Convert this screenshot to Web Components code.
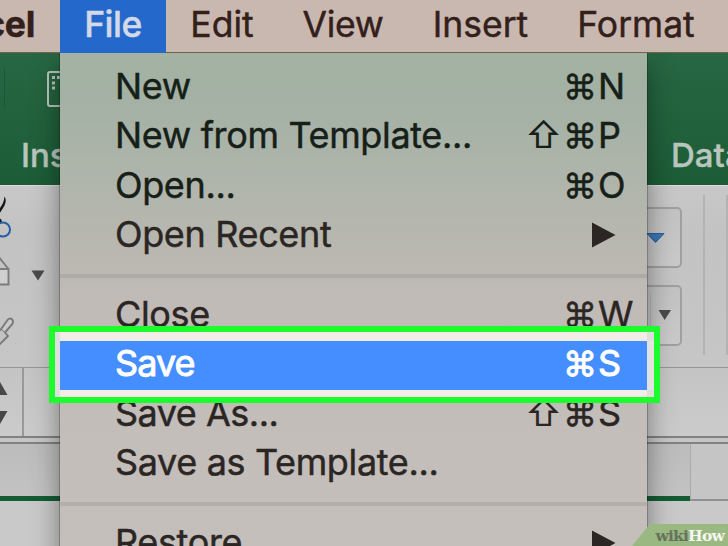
<!DOCTYPE html>
<html lang="en">
<head>
<meta charset="utf-8">
<title>File menu</title>
<style>
    html, body {
        margin: 0;
        width: 728px;
        height: 546px;
        overflow: hidden;
        font-family: Inter, "Liberation Sans", sans-serif;
    }
</style>
</head>
<body>
<app-screen>
    <menu-bar slot="bar">
        <bar-item app style="width: 60px">Excel</bar-item>
        <bar-item active style="width: 106px; --track: -0.5px">File</bar-item>
        <bar-item style="width: 112px; --track: 0">Edit</bar-item>
        <bar-item style="width: 130px">View</bar-item>
        <bar-item style="width: 145px; --track: 0">Insert</bar-item>
        <bar-item style="width: 166px; --track: 0">Format</bar-item>
    </menu-bar>
    <sheet-window slot="window"></sheet-window>
    <drop-menu slot="menu">
        <menu-row cmd="⌘" key="N">New</menu-row>
        <menu-row shift="⇧" cmd="⌘" key="P">New from Template...</menu-row>
        <menu-row cmd="⌘" key="O">Open...</menu-row>
        <menu-row submenu>Open Recent</menu-row>
        <menu-divider></menu-divider>
        <menu-row cmd="⌘" key="W">Close</menu-row>
        <menu-row selected cmd="⌘" key="S" style="--track: -0.9px">Save</menu-row>
        <menu-row shift="⇧" cmd="⌘" key="S" style="--track: -0.5px">Save As...</menu-row>
        <menu-row>Save as Template...</menu-row>
        <menu-divider></menu-divider>
        <menu-row submenu>Restore</menu-row>
    </drop-menu>
    <focus-frame slot="overlay"></focus-frame>
    <wiki-badge slot="overlay"><b>wiki</b><i>How</i></wiki-badge>
</app-screen>

<script>
class AppScreen extends HTMLElement {
    constructor() {
        super();
        const shadow = this.attachShadow({ mode: 'open' });
        shadow.innerHTML = `
        <style>
            :host {
                display: flex;
                flex-direction: column;
                position: relative;
                width: 728px;
                height: 546px;
                overflow: hidden;
                background: #c6c6c6;
            }
        </style>
        <slot name="bar"></slot>
        <slot name="window"></slot>
        <slot name="menu"></slot>
        <slot name="overlay"></slot>
        `;
    }
}

class MenuBar extends HTMLElement {
    constructor() {
        super();
        const shadow = this.attachShadow({ mode: 'open' });
        shadow.innerHTML = `
        <style>
            :host {
                display: flex;
                flex: none;
                height: 53px;
                box-sizing: border-box;
                background: #c9b8b0;
                border-bottom: 1px solid #75604f;
                color: #33201b;
            }
        </style>
        <slot></slot>
        `;
    }
}

class BarItem extends HTMLElement {
    constructor() {
        super();
        const shadow = this.attachShadow({ mode: 'open' });
        shadow.innerHTML = `
        <style>
            :host {
                display: flex;
                flex: none;
                justify-content: center;
                height: 52px;
                box-sizing: border-box;
                font-size: 35.5px;
                line-height: 50px;
                letter-spacing: var(--track, -0.3px);
                white-space: nowrap;
                -webkit-text-stroke: 0.45px currentColor;
            }
            :host([active]) {
                height: 53px;
                background: #2468cb;
                color: #d3d9e6;
                font-weight: 500;
            }
            :host([app]) {
                justify-content: flex-end;
                padding-right: 25px;
                font-weight: 700;
            }
        </style>
        <slot></slot>
        `;
    }
}

// the spreadsheet window that sits behind the open menu
class SheetWindow extends HTMLElement {
    constructor() {
        super();
        const shadow = this.attachShadow({ mode: 'open' });
        shadow.innerHTML = `
        <style>
            :host {
                display: flex;
                flex-direction: column;
                flex: 1;
            }
            .title, .ribbon, .formula, .strip, .cells {
                display: flex;
                justify-content: space-between;
                flex: none;
                box-sizing: border-box;
            }
            .title {
                height: 132px;
                background: linear-gradient(#286743, #1c5c36);
                color: #b9c5bd;
                font-size: 33px;
                font-weight: 500;
                line-height: 40px;
                -webkit-text-stroke: 0.4px currentColor;
            }
            .left, .right {
                display: flex;
                flex-direction: column;
            }
            .title .left { width: 100px; }
            .title .right { width: 57px; padding: 82px 0 0; }
            .title svg { margin: 14px 0 0; flex: none; }
            .tab { margin: 22px 0 0 21px; }
            .ribbon {
                height: 183px;
                border-top: 1px solid #dcdcdc;
                border-bottom: 1px solid #959595;
                background: linear-gradient(#c8c8c8, #c3c3c3 25%, #c6c6c6);
            }
            .ribbon .right {
                flex-direction: row;
                width: 88px;
            }
            .buttons {
                display: flex;
                flex-direction: column;
                gap: 17px;
                width: 48px;
                padding-top: 21px;
            }
            .button {
                display: flex;
                align-items: center;
                justify-content: flex-end;
                height: 61px;
                margin-right: 5px;
                box-sizing: border-box;
                border: 2px solid #a0a0a0;
                border-radius: 5px;
                background: linear-gradient(#c2c2c2, #cacaca);
            }
            .rule {
                flex: none;
                width: 2px;
                height: 160px;
                margin: 9px 0 0 16px;
                background: #b3b3b3;
            }
            .rule:last-child { margin-left: 21px; }
            .formula {
                height: 70px;
                border-bottom: 2px solid #818181;
                background: linear-gradient(#c4c4c4, #cbcbcb);
            }
            .spin {
                width: 24px;
                box-sizing: border-box;
                border-right: 2px solid #999;
            }
            .strip {
                height: 59px;
                margin-top: 4px;
                border-top: 2px solid #818181;
                background: linear-gradient(#bcbcbc, #c3c3c3);
            }
            .sheet {
                flex: 1;
                height: 52px;
                border-bottom: 5px solid #145c34;
            }
            .rest {
                width: 37px;
                height: 55px;
                border-left: 1px solid #aaa;
                border-bottom: 2px solid #919191;
                background: #c5c5c5;
            }
            .cells { flex: 1; background: #c9c9c9; }
        </style>
        <div class="title">
            <div class="left">
                <svg width="100" height="46" viewBox="0 0 100 46">
                    <path d="M4.500 1V41" stroke="#1c5837"/>
                    <rect x="48" y="5" width="30" height="34" rx="2" fill="none" stroke="#b9c5bd" stroke-width="2"/>
                    <g fill="#b9c5bd"><rect x="52" y="9" width="3" height="3"/><rect x="52" y="14.500" width="3" height="3"/><rect x="52" y="19.500" width="3" height="3"/><rect x="57" y="9" width="3" height="3"/></g>
                </svg>
                <span class="tab">Insert</span>
            </div>
            <div class="right"><span style="margin: 0 -40px 0 0">Data</span></div>
        </div>
        <div class="ribbon">
            <svg width="60" height="180" viewBox="0 186 60 180" fill="none">
                <path d="M-1 209C2 206 4 202 4.500 196.500C7.500 201 5 206 -1 214Z" fill="#161616"/>
                <path d="M0 219L1.500 223" stroke="#222" stroke-width="2"/>
                <circle cx="3" cy="229.500" r="7" stroke="#245fa8" stroke-width="2"/>
                <path d="M-12 269H8.500V284.500H-12M-2 256L8.500 269" fill="#cfcfcf" stroke="#7b7b7b" stroke-width="1.900"/>
                <path d="M31.500 270.500H44.500L38 280.500Z" fill="#4a4a4a"/>
                <path d="M-3 328L0 330L1.500 328.500L8 336L-2 346" fill="#c3c3c3" stroke="#797979" stroke-width="1.900" stroke-linejoin="round"/>
                <path d="M1.500 328.500L7.500 320C10 316.500 15 320 12 324.500L5 332.500" fill="#c9c9c9" stroke="#797979" stroke-width="1.900"/>
            </svg>
            <div class="right">
                <div class="buttons">
                    <div class="button">
                        <svg width="34" height="30" viewBox="0 0 34 30"><path d="M1 10.500H18L9.500 19.500Z" fill="#3976b6" stroke="#285e98"/></svg>
                    </div>
                    <div class="button">
                        <svg width="34" height="57" viewBox="0 0 34 57"><path d="M4.500 6V57" stroke="#b6b6b6"/><path d="M12.500 23H25L18.700 33Z" fill="#4b4b4b"/></svg>
                    </div>
                </div>
                <div class="rule"></div>
                <div class="rule"></div>
            </div>
        </div>
        <div class="formula">
            <div class="spin">
                <svg width="22" height="68" viewBox="0 368 22 68"><path d="M-8 395L0 382L7.500 395ZM-8 411H7.500L0 424Z" fill="#474747"/></svg>
            </div>
        </div>
        <div class="strip"><div class="sheet"></div><div class="rest"></div></div>
        <div class="cells"></div>
        `;
    }
}

class DropMenu extends HTMLElement {
    constructor() {
        super();
        const shadow = this.attachShadow({ mode: 'open' });
        shadow.innerHTML = `
        <style>
            :host {
                display: block;
                position: absolute;
                left: 60px;
                top: 53px;
                width: 587px;
                height: 540px;
                box-sizing: border-box;
                padding-top: 10px;
                color: #2b2624;
                background: linear-gradient(#a3b2a2, #a4b1a4 50px, #adb4aa 110px, #b4b6ad 160px, #bab8b1 205px, #c0bbb7 250px, #c3beba 400px, #c4bfba);
                box-shadow: 0 0 0 1px rgba(0, 0, 0, .22), 0 12px 26px rgba(0, 0, 0, .42);
                clip-path: inset(0 -60px -60px -60px);
            }
            ::slotted(menu-row:nth-of-type(-n+3)) { color: #162018; }
        </style>
        <slot></slot>
        `;
    }
}

class MenuRow extends HTMLElement {
    constructor() {
        super();
        const shadow = this.attachShadow({ mode: 'open' });
        const part = name => this.getAttribute(name) || '';
        const arrow = '<svg width="24" height="26" viewBox="0 0 24 26"><path d="M0 .5L23.500 13L0 25.500Z" fill="currentColor"/></svg>';
        shadow.innerHTML = `
        <style>
            :host {
                display: grid;
                grid-template-columns: 411px 37px 35px 49px;
                height: 49.3px;
                box-sizing: border-box;
                padding-left: 55px;
                font-size: 36px;
                line-height: 47px;
                letter-spacing: var(--track, -0.35px);
                white-space: nowrap;
                -webkit-text-stroke: 0.45px currentColor;
            }
            :host([selected]) {
                background: #458eff;
                color: #fff;
                -webkit-text-stroke-width: 0.9px;
            }
            .sign { font-size: 34px; }
            .shift {
                margin-left: -1px;
                font-size: 36px;
                -webkit-text-stroke-width: 0;
            }
            .arrow {
                grid-column: 3;
                padding: 11px 0 0 29px;
                line-height: 0;
            }
        </style>
        <span><slot></slot></span>
        ${this.hasAttribute('submenu')
            ? `<span class="arrow">${arrow}</span>`
            : `<span class="shift">${part('shift')}</span><span class="sign">${part('cmd')}</span><span>${part('key')}</span>`}
        `;
    }
}

class MenuDivider extends HTMLElement {
    constructor() {
        super();
        const shadow = this.attachShadow({ mode: 'open' });
        shadow.innerHTML = `
        <style>
            :host {
                display: block;
                height: 4px;
                margin: 13.500px 0;
                background: rgba(80, 75, 70, .13);
            }
        </style>
        `;
    }
}

class FocusFrame extends HTMLElement {
    constructor() {
        super();
        const shadow = this.attachShadow({ mode: 'open' });
        shadow.innerHTML = `
        <style>
            :host {
                display: flex;
                flex-direction: column;
                justify-content: space-between;
                position: absolute;
                left: 49px;
                top: 326px;
                width: 611px;
                height: 77px;
                box-sizing: border-box;
                border: 6px solid #1dfb2c;
            }
            .gap {
                height: 9px;
                margin: 0 7px 0 5px;
                background: #f3ede7;
                box-shadow: -5px 0 #dedede, 7px 0 #dedede;
            }
            .gap:last-child { height: 7px; }
            .middle {
                flex: 1;
                border-left: 5px solid #dedede;
                border-right: 7px solid #e3e3e3;
            }
        </style>
        <div class="gap"></div>
        <div class="middle"></div>
        <div class="gap"></div>
        `;
    }
}

class WikiBadge extends HTMLElement {
    constructor() {
        super();
        const shadow = this.attachShadow({ mode: 'open' });
        shadow.innerHTML = `
        <style>
            :host {
                display: flex;
                justify-content: flex-end;
                position: absolute;
                right: 0;
                bottom: 0;
                width: 96px;
                height: 22px;
                box-sizing: border-box;
                padding-right: 4px;
                background: #9ab881;
                clip-path: polygon(18px 0, 100% 0, 100% 100%, 0 100%);
                font: bold 15.5px/23px "DejaVu Serif", serif;
                letter-spacing: -0.8px;
            }
            ::slotted(b) { color: #66725c; }
            ::slotted(i) { color: #f4f6ef; font-style: normal; }
        </style>
        <slot></slot>
        `;
    }
}

customElements.define('app-screen', AppScreen);
customElements.define('menu-bar', MenuBar);
customElements.define('bar-item', BarItem);
customElements.define('sheet-window', SheetWindow);
customElements.define('drop-menu', DropMenu);
customElements.define('menu-row', MenuRow);
customElements.define('menu-divider', MenuDivider);
customElements.define('focus-frame', FocusFrame);
customElements.define('wiki-badge', WikiBadge);
</script>
</body>
</html>
